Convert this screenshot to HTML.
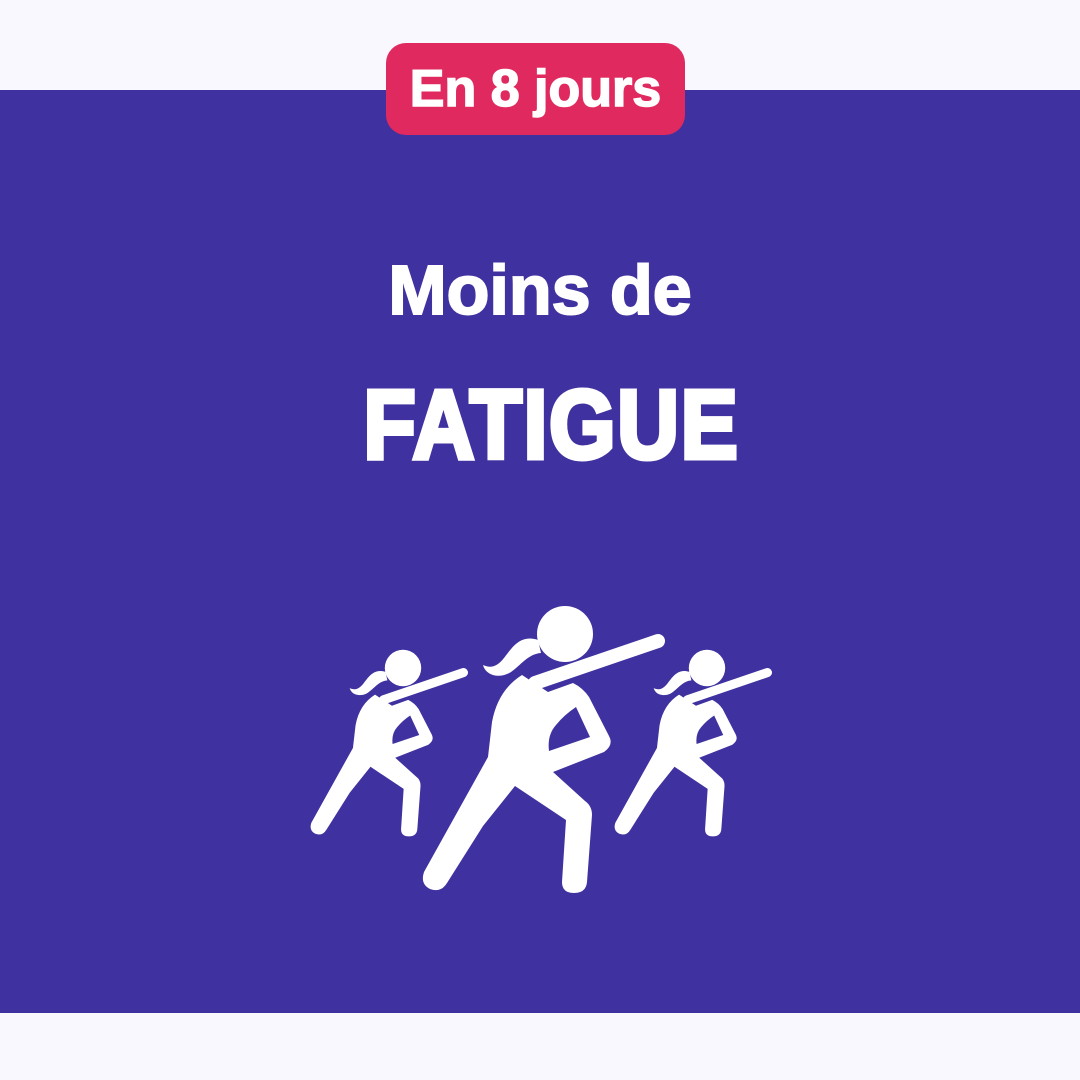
<!DOCTYPE html>
<html><head><meta charset="utf-8"><style>
html,body{margin:0;padding:0}
body{width:1080px;height:1080px;background:#f8f8fe;position:relative;overflow:hidden;font-family:"Liberation Sans",sans-serif}
.band{position:absolute;left:0;top:90px;width:1080px;height:923px;background:#3f32a0}
.badge{position:absolute;left:386px;top:43px;width:299px;height:92px;background:#e0295e;border-radius:20px;color:#fff;font-weight:bold;font-size:52px;line-height:92px;text-align:center;-webkit-text-stroke:1.5px #fff}
.t1{position:absolute;left:0;width:1080px;top:245px;text-align:center;color:#fff;font-weight:bold;font-size:70px;line-height:90px;-webkit-text-stroke:2px #fff}
.t2{position:absolute;left:0;width:1080px;top:370px;text-align:center;color:#fff;font-weight:900;font-size:97px;line-height:110px;transform:scaleX(0.88);letter-spacing:2px;-webkit-text-stroke:5px #fff;padding-left:26px;box-sizing:border-box}
svg{position:absolute;left:0;top:0}
</style></head><body>
<div class="band"></div>
<div class="badge">En 8 jours</div>
<div class="t1">Moins de</div>
<div class="t2">FATIGUE</div>
<svg width="1080" height="1080" viewBox="0 0 1080 1080">
<defs>
<g id="fig" fill="#fff">
<circle cx="565" cy="634" r="28"/>
<path d="M538 640 C520 634 512 648 504 658 C496 668 490 668 483 665 C486 676 500 679 511 672 C521 665 528 654 541 653 Z"/>
<line x1="535" y1="683" x2="658" y2="641" stroke="#fff" stroke-width="14" stroke-linecap="round"/>
<path fill-rule="evenodd" d="M522 675 Q498 690 492 722 L488 757 L424 872 Q420 884 430 889 Q441 893 447 883 L483 826 L515 786 L566 820 L562 882 Q562 893 574 893 Q586 893 587 882 L592 815 Q592 806 585 801 L553 772 L604 752 Q614 745 609 736 L589 697 Q583 688 573 683 L548 692 Z M576 707 L590 737 L549 751 Q547 735 556 725 Q564 715 576 707 Z"/>
</g>
</defs>
<use href="#fig" transform="translate(403,668) scale(0.65) translate(-565,-634)"/>
<use href="#fig" transform="translate(707,668) scale(0.65) translate(-565,-634)"/>
<use href="#fig"/>
</svg>
</body></html>
